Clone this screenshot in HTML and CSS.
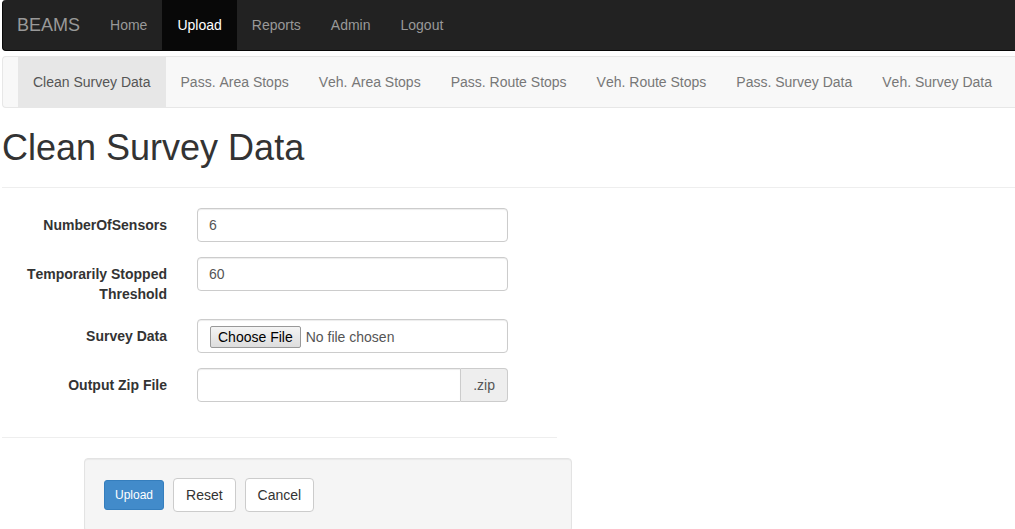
FILE: index.html
```html
<!DOCTYPE html>
<html lang="en">
<head>
<meta charset="utf-8">
<title>BEAMS - Clean Survey Data</title>
<link rel="stylesheet" href="styles.css">
</head>
<body>
<nav class="navbar navbar-inverse" aria-label="Main">
  <a class="brand" href="#">BEAMS</a>
  <a class="nav-link" href="#">Home</a>
  <a class="nav-link active" href="#">Upload</a>
  <a class="nav-link" href="#">Reports</a>
  <a class="nav-link" href="#">Admin</a>
  <a class="nav-link" href="#">Logout</a>
</nav>
<nav class="navbar navbar-light" aria-label="Upload">
  <a class="nav-link active" href="#">Clean Survey Data</a>
  <a class="nav-link" href="#">Pass. Area Stops</a>
  <a class="nav-link" href="#">Veh. Area Stops</a>
  <a class="nav-link" href="#">Pass. Route Stops</a>
  <a class="nav-link" href="#">Veh. Route Stops</a>
  <a class="nav-link" href="#">Pass. Survey Data</a>
  <a class="nav-link" href="#">Veh. Survey Data</a>
</nav>
<main>
  <h1 class="page-header">Clean Survey Data</h1>
  <form class="survey-form">
    <div class="form-group">
      <label for="sensors">NumberOfSensors</label>
      <input class="form-control" id="sensors" type="text" value="6">
    </div>
    <div class="form-group">
      <label for="threshold">Temporarily Stopped Threshold</label>
      <input class="form-control" id="threshold" type="text" value="60">
    </div>
    <div class="form-group">
      <label for="survey">Survey Data</label>
      <input class="form-control file-control" id="survey" type="file">
    </div>
    <div class="form-group">
      <label for="output">Output Zip File</label>
      <div class="input-group">
        <input class="form-control" id="output" type="text">
        <span class="addon">.zip</span>
      </div>
    </div>
    <hr class="divider">
    <div class="well">
      <button class="btn btn-primary" type="submit">Upload</button>
      <button class="btn" type="reset">Reset</button>
      <button class="btn" type="button">Cancel</button>
    </div>
  </form>
</main>
</body>
</html>
```
FILE: styles.css
```css
* {
  box-sizing: border-box;
}

body {
  margin: 0 0 0 2px;
  overflow: hidden;
  background: #fff;
  color: #333;
  font: 14px/20px "Liberation Sans", Arial, sans-serif;
  font-kerning: none;
}

.navbar {
  display: flex;
  border: 1px solid #e7e7e7;
  border-right: 0;
  border-radius: 4px 0 0 4px;
  white-space: nowrap;
}

.navbar a {
  padding: 15px;
  text-decoration: none;
}

.navbar-inverse {
  margin-bottom: 5px;
  border-color: #080808;
  border-top: 0;
  background: #222;
}

.navbar-inverse a {
  color: #999;
}

.navbar-inverse .brand {
  padding-left: 14px;
  font-size: 18px;
}

.navbar-inverse .active {
  background: #080808;
  color: #fff;
}

.navbar-light {
  padding-left: 15px;
  background: #f8f8f8;
}

.navbar-light a {
  color: #777;
}

.navbar-light .active {
  background: #e7e7e7;
  color: #555;
}

.page-header {
  margin: 20px 0;
  padding-bottom: 20px;
  border-bottom: 1px solid #eee;
  font-size: 36px;
  font-weight: 500;
  line-height: 39px;
}

.survey-form {
  width: calc(55% - 2px);
}

.form-group {
  display: grid;
  grid-template-columns: 165px minmax(0, 311px);
  column-gap: 30px;
  align-items: start;
  margin-bottom: 15px;
}

.form-group label {
  padding-top: 7px;
  font-weight: 700;
  text-align: right;
}

.form-control {
  width: 100%;
  min-width: 0;
  height: 34px;
  padding: 6px 11px;
  border: 1px solid #ccc;
  border-radius: 4px;
  background: #fff;
  box-shadow: inset 0 1px 1px rgba(0, 0, 0, 0.075);
  color: #555;
  font: inherit;
  font-kerning: none;
}

.file-control {
  padding-left: 12px;
}

.file-control::file-selector-button {
  height: 22px;
  margin: 0 5px 0 0;
  padding: 0 7px;
  border: 1px solid #999;
  border-radius: 2px;
  background: linear-gradient(#f4f4f4, #ddd);
  color: #000;
  font: inherit;
}

.input-group {
  display: flex;
}

.input-group .form-control {
  border-radius: 4px 0 0 4px;
}

.addon {
  padding: 6px 12px;
  border: 1px solid #ccc;
  border-left: 0;
  border-radius: 0 4px 4px 0;
  background: #eee;
  color: #555;
}

.divider {
  margin: 35px 0 20px;
  border: 0;
  border-top: 1px solid #eee;
}

.well {
  display: flex;
  align-items: center;
  gap: 9px;
  margin: 0 -15px 0 82px;
  padding: 19px;
  border: 1px solid #e3e3e3;
  border-radius: 4px;
  background: #f5f5f5;
  box-shadow: inset 0 1px 1px rgba(0, 0, 0, 0.05);
}

.btn {
  padding: 6px 12px;
  border: 1px solid #ccc;
  border-radius: 4px;
  background: #fff;
  color: #333;
  font: inherit;
  font-kerning: none;
}

.btn-primary {
  padding: 5px 10px;
  border-color: #357ebd;
  border-radius: 3px;
  background: #428bca;
  color: #fff;
  font-size: 12px;
  line-height: 18px;
}
```
